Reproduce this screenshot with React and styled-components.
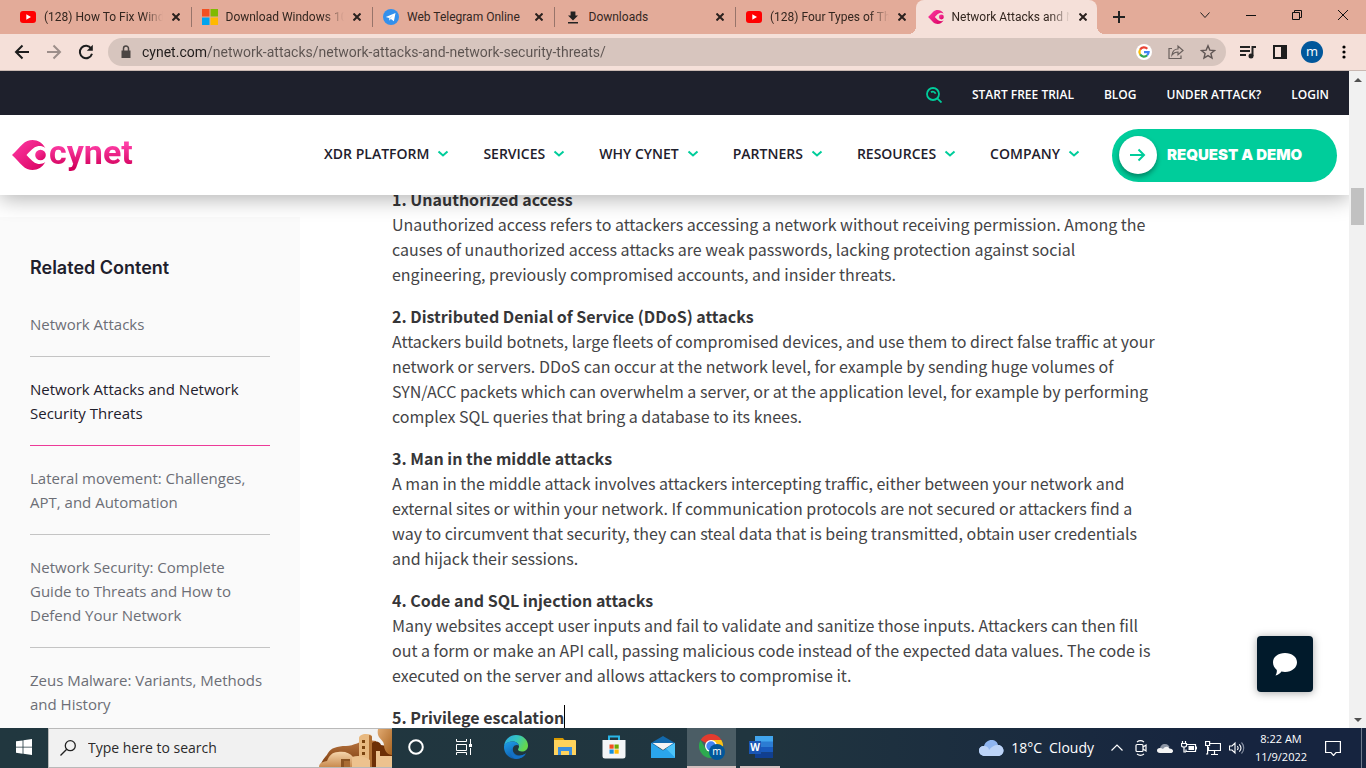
import React from 'react';
import styled, { createGlobalStyle, css } from 'styled-components';

const segoe = '"Open Sans", "Noto Sans", sans-serif';
const chromeUi = 'Roboto, "Open Sans", sans-serif';
const source = '"Noto Sans CJK SC", "Noto Sans", sans-serif';
const green = '#00cd9b';

const GlobalStyle = createGlobalStyle`
  *, *::before, *::after { box-sizing: border-box; }
  body { margin: 0; font-family: ${segoe}; overflow: hidden; }
  button { border: 0; padding: 0; background: none; font: inherit; color: inherit; }
  a { color: inherit; text-decoration: none; }
  svg { display: block; flex: none; }
  ul { list-style: none; margin: 0; padding: 0; }
`;

const Screen = styled.div`
  height: 100vh;
  display: flex;
  flex-direction: column;
`;

/* Browser tabs */
const TabStrip = styled.div`
  flex: none;
  height: 34px;
  display: flex;
  padding-left: 8px;
  background: #e3ab99;
`;
const TabList = styled.div`
  flex: 0 1 1089px;
  display: grid;
  grid-template-columns: repeat(6, minmax(0, 1fr));
`;
const Tab = styled.div`
  position: relative;
  display: flex;
  align-items: center;
  padding-right: 6px;
  font: 12px/16px ${chromeUi};
  color: #33261f;
  &::before {
    content: '';
    width: 1px;
    height: 20px;
    margin: 0 10px 0 1px;
    background: ${p => (p.$divided ? '#97746a' : 'transparent')};
  }
  ${p => p.$active && css`
    background: #f5e0d9;
    border-radius: 8px 8px 0 0;
  `}
`;
const TabFlare = styled.i`
  position: absolute;
  bottom: 0;
  width: 8px;
  height: 8px;
  ${p => (p.$right ? 'left: 100%;' : 'right: 100%;')}
  background: radial-gradient(circle at ${p => (p.$right ? '100%' : '0')} 0, transparent 8px, #f5e0d9 8px);
`;
const TabTitle = styled.button`
  flex: 1;
  min-width: 0;
  margin: 0 5px 0 8px;
  overflow: hidden;
  white-space: nowrap;
  text-align: left;
  ${p => p.$fade && 'mask-image: linear-gradient(to left, transparent, #000 20px);'}
`;
const TabClose = styled.button`
  display: grid;
  place-items: center;
  width: 16px;
  height: 16px;
`;
const NewTab = styled.button`
  display: grid;
  place-items: center;
  width: 28px;
  height: 34px;
  margin-left: 8px;
`;
const WindowControls = styled.div`
  margin-left: auto;
  display: flex;
  height: 29px;
`;
const WindowButton = styled.button`
  width: 46px;
  display: grid;
  place-items: center;
`;

/* Browser toolbar */
const Toolbar = styled.div`
  flex: none;
  height: 37px;
  display: flex;
  align-items: center;
  padding: 0 6px;
  background: #f5e0d9;
  border-bottom: 1px solid #c9b8b2;
`;
const ToolButton = styled.button`
  width: 32px;
  height: 28px;
  display: grid;
  place-items: center;
`;
const Omnibox = styled.form`
  flex: 1;
  height: 28px;
  margin: 0 6px;
  padding: 0 2px 0 10px;
  display: flex;
  align-items: center;
  border-radius: 14px;
  background: #d7c5be;
`;
const UrlInput = styled.input`
  flex: 1;
  min-width: 0;
  height: 20px;
  margin-left: 8px;
  padding: 0;
  border: 0;
  outline: 0;
  font: 14px/20px ${chromeUi};
  color: #5c5350;
  background: linear-gradient(to right, #201c1b 65px, #5c5350 65px);
  background-clip: text;
  -webkit-text-fill-color: transparent;
`;
const Avatar = styled.span`
  width: 22px;
  height: 22px;
  border-radius: 50%;
  background: #01579b;
  color: #fff;
  font-size: 13px;
  line-height: 20px;
  text-align: center;
`;

/* Page viewport */
const Viewport = styled.div`
  flex: 1;
  min-height: 0;
  display: flex;
`;
const Page = styled.div`
  position: relative;
  flex: 1;
  min-width: 0;
  overflow: hidden;
  background: #fff;
`;
const SiteHeader = styled.header`
  position: relative;
  z-index: 1;
  background: #fff;
  box-shadow: 0 4px 20px rgba(0, 0, 0, 0.3);
`;
const TopBar = styled.nav`
  height: 44px;
  display: flex;
  align-items: center;
  justify-content: flex-end;
  gap: 30px;
  padding: 4px 20px 0 0;
  background: #1e202c;
  color: #fff;
  font: 600 12px/16px ${segoe};
`;
const SearchButton = styled.button`
  width: 16px;
`;
const MainBar = styled.div`
  height: 80px;
  display: flex;
  align-items: center;
  padding: 0 12px;
`;
const Brand = styled.a`
  display: flex;
  align-items: center;
  margin-right: auto;
`;
const BrandName = styled.span`
  margin-left: 3px;
  height: 46px;
  font: 700 34px/40px Roboto, sans-serif;
  background: linear-gradient(to bottom, #ff3fa8 12px, #d2005a 36px);
  background-clip: text;
  color: transparent;
`;
const Menu = styled.nav`
  display: flex;
  gap: 34px;
  margin-right: 32px;
  padding-bottom: 2px;
`;
const MenuItem = styled.button`
  display: flex;
  align-items: center;
  gap: 8px;
  font: 600 14px/20px ${segoe};
  color: #1e202c;
`;
const DemoLink = styled.a`
  width: 225px;
  height: 53px;
  padding-left: 7px;
  display: flex;
  align-items: center;
  gap: 10px;
  border-radius: 27px;
  background: ${green};
  color: #fff;
  font: 900 15px/20px Inter, sans-serif;
  white-space: nowrap;
`;
const DemoArrow = styled.span`
  width: 38px;
  height: 38px;
  display: grid;
  place-items: center;
  border-radius: 50%;
  background: #fff;
  box-shadow: 0 3px 5px rgba(0, 0, 0, 0.35);
`;
const Columns = styled.div`
  display: flex;
  align-items: flex-start;
`;
const Sidebar = styled.aside`
  flex: none;
  width: 300px;
  margin-top: 22px;
  padding: 39px 30px;
  background: #fafafa;
`;
const SidebarTitle = styled.h2`
  margin: 0 0 12px;
  font: 600 18px/24px Inter, sans-serif;
  color: #1e202c;
`;
const SidebarItem = styled.li`
  padding: 20px 0;
  border-bottom: 1px solid ${p => (p.$current ? '#ed3a98' : '#c4c4c4')};
  font-size: 15px;
  line-height: 24px;
  color: ${p => (p.$current ? '#1e202c' : '#6c6e76')};
`;
const Article = styled.main`
  flex: 0 1 772px;
  margin: -8px 0 0 92px;
  font: 16px/25px ${source};
  color: #444446;
`;
const Section = styled.section`
  margin-bottom: 17px;
`;
const SectionTitle = styled.h3`
  margin: 0;
  display: flex;
  font: 700 16px/25px ${source};
  color: #363638;
`;
const Paragraph = styled.p`
  margin: 0;
`;
const Caret = styled.i`
  width: 1px;
  background: #000;
`;
const ChatButton = styled.button`
  position: absolute;
  right: 36px;
  bottom: 36px;
  width: 56px;
  height: 56px;
  display: grid;
  place-items: center;
  border-radius: 4px;
  background: #011a2b;
  box-shadow: 0 1px 8px rgba(0, 0, 0, 0.35);
`;
const ScrollBar = styled.div`
  flex: none;
  width: 17px;
  display: flex;
  flex-direction: column;
  background: #f1f1f1;
`;
const ScrollButton = styled.button`
  height: 17px;
  display: grid;
  place-items: center;
`;
const ScrollTrack = styled.div`
  flex: 1;
  padding: 100px 2px 0;
`;
const ScrollThumb = styled.div`
  height: 37px;
  background: #c1c1c1;
`;

/* Taskbar */
const TaskBar = styled.footer`
  flex: none;
  height: 40px;
  display: flex;
  background: linear-gradient(to right, #21373f, #20353f 55%, #16243f 90%);
  color: #fff;
`;
const TaskButton = styled.button`
  position: relative;
  width: ${p => (p.$app ? 49 : 48)}px;
  display: grid;
  place-items: center;
  background: ${p => (p.$active ? '#4b5d65' : 'none')};
  border-bottom: 2px solid ${p => (p.$active ? '#d3c0bf' : 'transparent')};
`;
const OpenMark = styled.i`
  position: absolute;
  left: 4px;
  right: 5px;
  bottom: -2px;
  height: 2px;
  background: #d3c0bf;
`;
const TaskSearch = styled.label`
  width: 344px;
  display: flex;
  align-items: center;
  padding-left: 11px;
  border: 1px solid #b9b9b9;
  border-right: 0;
  background: #f1f1f1;
`;
const TaskSearchInput = styled.input`
  flex: 1;
  min-width: 0;
  margin-left: 12px;
  padding: 0;
  border: 0;
  outline: 0;
  background: none;
  font: 14px/20px ${segoe};
  &::placeholder { color: #2b2b2b; opacity: 1; }
`;
const AppGroup = styled.div`
  display: flex;
  margin-left: 3px;
`;
const Tray = styled.div`
  margin-left: auto;
  display: flex;
  align-items: center;
`;
const Weather = styled.button`
  display: flex;
  align-items: center;
  gap: 7px;
  margin-right: 11px;
  font-size: 14px;
  line-height: 20px;
`;
const TrayButton = styled.button`
  width: 24px;
  height: 40px;
  display: grid;
  place-items: center;
`;
const Clock = styled.time`
  width: 56px;
  margin-left: 4px;
  text-align: center;
  font-size: 11px;
  line-height: 18px;
  white-space: nowrap;
`;
const Notifications = styled.button`
  width: 48px;
  height: 40px;
  margin-right: 4px;
  display: grid;
  place-items: center;
`;
const ShowDesktop = styled.button`
  width: 5px;
  height: 40px;
  border-left: 1px solid #6f7a8c;
`;

const Icon = ({ w = 16, h, box, stroke, sw = 2, children }) => (
  <svg width={w} height={h || w} viewBox={box || `0 0 ${w} ${h || w}`} fill={stroke ? 'none' : 'currentColor'} stroke={stroke} strokeWidth={sw} aria-hidden="true">
    {children}
  </svg>
);

const YouTube = () => (
  <Icon><rect y="2" width="16" height="12" rx="3" fill="#f00" /><path d="M6.3 5.3v5.4L11 8z" fill="#fff" /></Icon>
);
const Microsoft = ({ size = 16 }) => (
  <Icon w={size} box="0 0 16 16">
    <path d="M0 0h7.5v7.5H0z" fill="#f25022" /><path d="M8.5 0H16v7.5H8.5z" fill="#7fba00" />
    <path d="M0 8.5h7.5V16H0z" fill="#00a4ef" /><path d="M8.5 8.5H16V16H8.5z" fill="#ffb900" />
  </Icon>
);
const Telegram = () => (
  <Icon><circle cx="8" cy="8" r="8" fill="#3390ec" /><path d="M2.8 8 12.5 4l-1.6 8.3-3-2.2-1.5 1.4-.3-2.5z" fill="#fff" /><path d="m6.1 9 4.4-3.1-3.2 3.7-.9 1.9z" fill="#b8dbfa" /></Icon>
);
const DownloadIcon = () => (
  <Icon><path d="M5.6 2.5h4.800v4H13l-5 5-5-5h2.600zM3 13h10v1.600H3z" fill="#222" /></Icon>
);
const CynetMark = ({ w, h }) => (
  <svg width={w} height={h} viewBox="0 0 34 30" aria-hidden="true">
    <defs>
      <linearGradient id="mark" x1="0" y1="0" x2="1" y2="1">
        <stop offset="0" stopColor="#ff3ba5" /><stop offset="1" stopColor="#d8005f" />
      </linearGradient>
    </defs>
    <path d="M0 15C4 11.500 7 7.500 10.500 4.200 13.500 1.300 17 0 20.500 0c5.500 0 10 2.800 12.800 8-2.500-1.900-5.300-2.200-7.800-1.700C21.500 7 19 10.500 14.500 15c4.500 4.500 7 8 11 8.700 2.500.5 5.300.2 7.800-1.700-2.800 5.200-7.300 8-12.800 8-3.500 0-7-1.300-10-4.200C7 22.500 4 18.500 0 15z" fill="url(#mark)" />
    <circle cx="28.500" cy="15" r="5.300" fill="url(#mark)" />
  </svg>
);
const Cross = () => <Icon w={8} stroke="#2a211e" sw={2}><path d="m.5.5 7 7m0-7-7 7" /></Icon>;

const tabs = [
  { title: '(128) How To Fix Wind', icon: <YouTube />, fade: true },
  { title: 'Download Windows 10', icon: <Microsoft />, fade: true },
  { title: 'Web Telegram Online', icon: <Telegram /> },
  { title: 'Downloads', icon: <DownloadIcon /> },
  { title: '(128) Four Types of Th', icon: <YouTube />, fade: true },
  { title: 'Network Attacks and N', icon: <CynetMark w={16} h={14} />, fade: true, active: true },
];

const menu = ['XDR PLATFORM', 'SERVICES', 'WHY CYNET', 'PARTNERS', 'RESOURCES', 'COMPANY'];

const related = [
  'Network Attacks',
  'Network Attacks and Network Security Threats',
  'Lateral movement: Challenges, APT, and Automation',
  'Network Security: Complete Guide to Threats and How to Defend Your Network',
  'Zeus Malware: Variants, Methods and History',
];

const sections = [
  ['1. Unauthorized access', 'Unauthorized access refers to attackers accessing a network without receiving permission. Among the causes of unauthorized access attacks are weak passwords, lacking protection against social engineering, previously compromised accounts, and insider threats.'],
  ['2. Distributed Denial of Service (DDoS) attacks', 'Attackers build botnets, large fleets of compromised devices, and use them to direct false traffic at your network or servers. DDoS can occur at the network level, for example by sending huge volumes of SYN/ACC packets which can overwhelm a server, or at the application level, for example by performing complex SQL queries that bring a database to its knees.'],
  ['3. Man in the middle attacks', 'A man in the middle attack involves attackers intercepting traffic, either between your network and external sites or within your network. If communication protocols are not secured or attackers find a way to circumvent that security, they can steal data that is being transmitted, obtain user credentials and hijack their sessions.'],
  ['4. Code and SQL injection attacks', 'Many websites accept user inputs and fail to validate and sanitize those inputs. Attackers can then fill out a form or make an API call, passing malicious code instead of the expected data values. The code is executed on the server and allows attackers to compromise it.'],
  ['5. Privilege escalation', null],
];

function BrowserTabs() {
  return (
    <TabStrip>
      <TabList>
        {tabs.map((t, i) => (
          <Tab key={t.title} $active={t.active} $divided={i > 0 && !t.active}>
            {t.active && <><TabFlare /><TabFlare $right /></>}
            {t.icon}
            <TabTitle $fade={t.fade}>{t.title}</TabTitle>
            <TabClose aria-label="Close tab"><Cross /></TabClose>
          </Tab>
        ))}
      </TabList>
      <NewTab aria-label="New tab"><Icon w={12} stroke="#222"><path d="M6 0v12M0 6h12" /></Icon></NewTab>
      <WindowControls>
        <WindowButton aria-label="Search tabs"><Icon w={10} stroke="#222" sw={1}><path d="m.5 2.500 4.500 5 4.500-5" /></Icon></WindowButton>
        <WindowButton aria-label="Minimize"><Icon w={10} stroke="#111" sw={1}><path d="M0 5.500h10" /></Icon></WindowButton>
        <WindowButton aria-label="Restore"><Icon w={10} stroke="#111" sw={1}><path d="M.5 2.500h7v7h-7zM2.500 2.500v-2h7v7h-2" /></Icon></WindowButton>
        <WindowButton aria-label="Close"><Icon w={10} stroke="#111" sw={1}><path d="m0 0 10 10M10 0 0 10" /></Icon></WindowButton>
      </WindowControls>
    </TabStrip>
  );
}

function BrowserToolbar() {
  return (
    <Toolbar>
      <ToolButton aria-label="Back"><Icon stroke="#1d1d1d"><path d="M15 8H2m6.500-6.500L2 8l6.500 6.500" /></Icon></ToolButton>
      <ToolButton aria-label="Forward"><Icon stroke="#9c8e8a"><path d="M1 8h13M7.500 1.500 14 8l-6.500 6.500" /></Icon></ToolButton>
      <ToolButton aria-label="Reload"><Icon stroke="#1d1d1d"><path d="M13.200 4.500A6.200 6.200 0 1 0 14 9.800" /><path d="M14.800.8v6H8.800z" fill="#1d1d1d" stroke="none" /></Icon></ToolButton>
      <Omnibox>
        <Icon><path d="M3.500 6.500h9v7.500h-9z" fill="#4b4543" /><path d="M5.500 7V4.500a2.500 2.500 0 0 1 5 0V7" fill="none" stroke="#4b4543" strokeWidth="1.500" /></Icon>
        <UrlInput aria-label="Address" defaultValue="cynet.com/network-attacks/network-attacks-and-network-security-threats/" />
        <ToolButton type="button" aria-label="Search with Google">
          <Icon>
            <circle cx="8" cy="8" r="8" fill="#fff" />
            <g fill="none" strokeWidth="2.200">
              <path d="M4.100 5.600A4.600 4.600 0 0 1 11.300 4.800" stroke="#ea4335" />
              <path d="M4.100 10.400a4.600 4.600 0 0 1 0-4.800" stroke="#fbbc05" />
              <path d="M11.200 11.300A4.600 4.600 0 0 1 4.100 10.400" stroke="#34a853" />
              <path d="M8 8.200h4.600a4.600 4.600 0 0 1-1.500 3.100" stroke="#4285f4" />
            </g>
          </Icon>
        </ToolButton>
        <ToolButton type="button" aria-label="Share"><Icon stroke="#6a605d" sw={1.200}><path d="M4 4.500H1v10h12v-3" /><path d="M4 11c.5-4 2.500-6 6-6V2l5 4.500-5 4.300V8C7.500 8 5.500 9 4 11z" /></Icon></ToolButton>
        <ToolButton type="button" aria-label="Bookmark"><Icon stroke="#5f5553" sw={1.400}><path d="m8 1.800 1.800 4.300 4.700.4-3.600 3 1.100 4.600L8 11.600l-4 2.500 1.100-4.600-3.600-3 4.700-.4z" /></Icon></ToolButton>
      </Omnibox>
      <ToolButton aria-label="Media controls"><Icon stroke="#222"><path d="M0 3h10M0 7h10M0 11h6" /><path d="M12.500 12V3H16" /><circle cx="11" cy="12" r="1.500" fill="#222" /></Icon></ToolButton>
      <ToolButton aria-label="Side panel"><Icon w={14}><path d="M0 0h14v14H0zM2 2v10h6V2z" fillRule="evenodd" fill="#1d1d1d" /></Icon></ToolButton>
      <ToolButton aria-label="Profile"><Avatar>m</Avatar></ToolButton>
      <ToolButton aria-label="Browser menu"><Icon><circle cx="8" cy="3" r="1.600" /><circle cx="8" cy="8" r="1.600" /><circle cx="8" cy="13" r="1.600" /></Icon></ToolButton>
    </Toolbar>
  );
}

function Header() {
  return (
    <SiteHeader>
      <TopBar aria-label="Account">
        <SearchButton aria-label="Search">
          <Icon stroke={green} sw={1.800}><circle cx="7" cy="7" r="6" /><path d="m11.300 11.300 4.200 4.200M5 5.200c1.500-1.200 4-.5 4.500 1.500" /></Icon>
        </SearchButton>
        <a href="#trial">START FREE TRIAL</a>
        <a href="#blog">BLOG</a>
        <a href="#attack">UNDER ATTACK?</a>
        <a href="#login">LOGIN</a>
      </TopBar>
      <MainBar>
        <Brand href="#home"><CynetMark w={34} h={30} /><BrandName>cynet</BrandName></Brand>
        <Menu aria-label="Main">
          {menu.map(m => (
            <MenuItem key={m}>{m}<Icon w={12} stroke={green}><path d="m1.500 3.500 4.500 4 4.500-4" /></Icon></MenuItem>
          ))}
        </Menu>
        <DemoLink href="#demo">
          <DemoArrow><Icon stroke={green}><path d="M0 8h14M8.500 2.500 14 8l-5.500 5.500" /></Icon></DemoArrow>
          REQUEST A DEMO
        </DemoLink>
      </MainBar>
    </SiteHeader>
  );
}

const Edge = () => (
  <svg width="24" height="24" viewBox="0 0 24 24" aria-hidden="true">
    <defs>
      <linearGradient id="edgeTop" x1="0" y1="0" x2="1" y2=".4"><stop offset="0" stopColor="#2aa7e8" /><stop offset=".55" stopColor="#35c6c0" /><stop offset="1" stopColor="#64d84e" /></linearGradient>
      <linearGradient id="edgeLow" x1="0" y1="0" x2=".6" y2="1"><stop offset="0" stopColor="#1fa0ea" /><stop offset="1" stopColor="#0c56a8" /></linearGradient>
    </defs>
    <path d="M0 11C.8 4.600 5.800 0 12 0c7 0 12 5 12 10.500 0 4-3 6-6 6-2.500 0-4-1-4-2 0-.8 1-1.200 1-3C15 8.500 12 6.500 8.500 6.500 4.500 6.500 1.500 8.500 0 11z" fill="url(#edgeTop)" />
    <path d="M0 12c0-3.500 4-5.500 8.500-5.500 3.500 0 6 1.700 6.300 4.200-1-1-4.600-1-5.800 2-1.400 3.800 2 7.800 6.500 7.800 2.500 0 4.500-.8 6.500-2.200C20 22 16.500 24 12 24 5.500 24 0 19 0 12z" fill="url(#edgeLow)" />
    <path d="M9 12.700c-2 4.300 1.500 9 7 8 2.500-.3 4-1 6-2.400C20 22 16.500 24 12 24c-5-1-7.500-8-3-11.300z" fill="#1470c4" />
  </svg>
);
const Folder = () => (
  <svg width="22" height="20" viewBox="0 0 22 20" aria-hidden="true">
    <path d="M0 1h9l1.500 2H0z" fill="#d99a00" /><path d="M0 3h21a1 1 0 0 1 1 1v14H0z" fill="#ffd35c" />
    <path d="M4 10h14v8h-3v-4H7v4H4z" fill="#3b8ede" />
  </svg>
);
const Store = () => (
  <svg width="24" height="24" viewBox="0 0 24 24" aria-hidden="true">
    <path d="M7 6V1.500h10V6" fill="none" stroke="#29b6e8" strokeWidth="2" />
    <path d="M.5 5h23v16a2.500 2.500 0 0 1-2.500 2.500H3A2.500 2.500 0 0 1 .5 21z" fill="#f3f5f7" />
    <path d="M7.500 9.500h4.200v4.200H7.500z" fill="#f25022" /><path d="M12.500 9.500h4.200v4.200h-4.200z" fill="#6fa800" />
    <path d="M7.500 14.500h4.200v4.200H7.500z" fill="#1490df" /><path d="M12.500 14.500h4.200v4.200h-4.200z" fill="#ffb900" />
  </svg>
);
const Mail = () => (
  <svg width="24" height="24" viewBox="0 0 24 24" aria-hidden="true">
    <path d="M0 8 12 1l12 7v4H0z" fill="#1269ac" />
    <path d="m0 8 12 7.500L24 8v15H0z" fill="#2aa5ec" /><path d="M1.500 8h21L12 15z" fill="#f5f5f5" /><path d="m24 8-9 5.500 9 9z" fill="#4cc3f8" />
  </svg>
);
const Chrome = () => (
  <svg width="26" height="26" viewBox="0 0 26 26" aria-hidden="true">
    <path d="M12 12 1.600 6A12 12 0 0 1 22.400 6z" fill="#e33b2e" />
    <path d="M12 12V6h10.400A12 12 0 0 1 12 24z" fill="#fbc116" />
    <path d="M12 12 6.800 15 1.600 6A12 12 0 0 0 12 24l5.200-9z" fill="#2da94f" />
    <circle cx="12" cy="12" r="6" fill="#fff" /><circle cx="12" cy="12" r="4.700" fill="#4285f4" />
    <circle cx="18" cy="18" r="8" fill="#01579b" />
    <text x="18" y="21" textAnchor="middle" fontFamily="Open Sans, sans-serif" fontSize="10" fill="#fff">m</text>
  </svg>
);
const Word = () => (
  <svg width="24" height="22" viewBox="0 0 24 22" aria-hidden="true">
    <path d="M6 0h18v6H6z" fill="#41a5ee" /><path d="M6 5.500h18V11H6z" fill="#2b7cd3" /><path d="M6 11h18v5.500H6z" fill="#185abd" /><path d="M6 16.500h18V22H6z" fill="#103f91" />
    <path d="M0 5h12v13H0z" fill="#1a56b4" />
    <text x="6" y="15" textAnchor="middle" fontFamily="Open Sans, sans-serif" fontWeight="700" fontSize="10" fill="#fff">W</text>
  </svg>
);
const SearchArt = () => (
  <svg width="74" height="38" viewBox="0 0 74 38" aria-hidden="true">
    <defs>
      <linearGradient id="rock" x1="0" y1="0" x2="0" y2="1"><stop offset="0" stopColor="#b87540" /><stop offset="1" stopColor="#7a3a0c" /></linearGradient>
      <linearGradient id="sand" x1="0" y1="0" x2="0" y2="1"><stop offset="0" stopColor="#f5d5ac" /><stop offset="1" stopColor="#c98b4f" /></linearGradient>
      <linearGradient id="cliff" x1="0" y1="0" x2="1" y2="1"><stop offset="0" stopColor="#e0a970" /><stop offset="1" stopColor="#a8621f" /></linearGradient>
    </defs>
    <path d="M2 38c2-8 6-10 8-14 3-5 9-7 18-7 8 0 14-5 22-6l8 1v26z" fill="url(#rock)" />
    <path d="M54 14c4-3 8-1 9 2l11 2v20H54z" fill="#6d2f06" />
    <path d="M60 0h14v26c-4 0-8-4-8-10 0-6-8-6-6-16z" fill="url(#cliff)" />
    <path d="M1 38c0-4 3-5 8-6 2-5 5-9 11-9 7-1 12 1 15 5v10z" fill="url(#sand)" />
    <path d="M41 9c0-2 3-4 7-4s6 1 6 3v30H41z" fill="#e8b980" /><path d="M51 6c2 0 3 1 3 2v30h-3z" fill="#b06f33" />
    <path d="M44 11h3v3h-3zm0 6h3v3h-3zm0 6h3v3h-3z" fill="#7b430f" />
    <path d="M34 28c6-2 12-1 18 3v7H34zM58 22h4v5h12v11H58z" fill="#edc28e" />
    <path d="M23 30h9v8h-9z" fill="#8b5321" /><path d="M26 32h6v6h-6z" fill="#a96c33" />
  </svg>
);

function Taskbar() {
  return (
    <TaskBar>
      <TaskButton aria-label="Start"><Icon><path d="M0 2.300 6.600 1.400V7.700H0zM7.400 1.300 16 0v7.700H7.400zM0 8.400h6.600v6.300L0 13.800zM7.400 8.400H16V16l-8.600-1.200z" /></Icon></TaskButton>
      <TaskSearch>
        <Icon stroke="#222" sw={1.300}><circle cx="10.300" cy="5.700" r="5" /><path d="M6.700 9.300.5 15.500" /></Icon>
        <TaskSearchInput placeholder="Type here to search" />
        <SearchArt />
      </TaskSearch>
      <TaskButton aria-label="Cortana"><Icon stroke="#fff"><circle cx="8" cy="8" r="6.800" /></Icon></TaskButton>
      <TaskButton aria-label="Task view"><Icon stroke="#fff" sw={1}><path d="M.5 0v2.500h10V0M.5 5.500h10v6H.5zM.5 16v-2.500h10V16M14.500 0v5M14.500 9v7" /><path d="M13 5h3v3h-3z" fill="#fff" stroke="none" /></Icon></TaskButton>
      <AppGroup>
        <TaskButton $app aria-label="Edge"><Edge /></TaskButton>
        <TaskButton $app aria-label="File Explorer"><Folder /></TaskButton>
        <TaskButton $app aria-label="Store"><Store /></TaskButton>
        <TaskButton $app aria-label="Mail"><Mail /></TaskButton>
        <TaskButton $app $active aria-label="Chrome"><Chrome /></TaskButton>
        <TaskButton $app aria-label="Word"><Word /><OpenMark /></TaskButton>
      </AppGroup>
      <Tray>
        <Weather>
          <svg width="25" height="17" viewBox="0 0 25 17" aria-hidden="true">
            <path d="M5 6C6 2.500 9 0 12.500 0 16 0 18.500 2 19 5c3 0 5.500 2.500 5.500 5.500S22 16 19 16H6C2.500 16 0 13.500 0 10.700 0 8 2 6 5 6z" fill="#8fb5f0" />
            <path d="M0 10.700C0 8 2 6 5 6c3 0 5 2 5 4 2-3 5-5 9-5 3 0 5.500 2.500 5.500 5.500S22 16 19 16H6c-3.500 0-6-2.500-6-5.300z" fill="#bcd3f7" />
          </svg>
          <span>18°C</span><span>Cloudy</span>
        </Weather>
        <TrayButton aria-label="Hidden icons"><Icon w={12} stroke="#fff" sw={1.200}><path d="m.5 8.500 5.500-5.500 5.500 5.500" /></Icon></TrayButton>
        <TrayButton aria-label="Meet now"><Icon stroke="#fff" sw={1.200}><rect x="3" y="4.500" width="7" height="7" rx="1" /><path d="m10 7 3-2v6l-3-2M4 2c2-1.500 5-1.500 7 0M4 14c2 1.500 5 1.500 7 0" /></Icon></TrayButton>
        <TrayButton aria-label="OneDrive"><Icon><path d="M3 9c0-3 2-5 5-5s4 2 4.500 3L7 12z" fill="#8c95a4" /><path d="M3 13c-4 0-4-5 0-5 1 0 2 .3 3 1 2-3 5-3 6.500-.5C17 8.500 17 13 13.500 13z" fill="#f4f4f4" /></Icon></TrayButton>
        <TrayButton aria-label="Battery"><Icon stroke="#fff" sw={1.200}><path d="M6 4.500h8.500v7H5v-2M15.500 6.500v3M1.500 1v2M4.500 1v2M.5 3.500h5v2c0 1-1 1.500-2.500 1.500S.500 6.500.5 5.500zM3 7v5h2" /><path d="M7.500 6h5.500v4H7.500z" fill="#fff" stroke="none" /></Icon></TrayButton>
        <TrayButton aria-label="Network"><Icon stroke="#fff" sw={1.200}><path d="M5 3.500h10.500v7H3.500V7M9.500 10.500v4M6 14.500h7M.6 1.500h4v4h-4zM2.600 5.500V14H1" /></Icon></TrayButton>
        <TrayButton aria-label="Volume"><Icon stroke="#fff" sw={1.100}><path d="M.5 6v4H3l3 3V3L3 6zM8.300 6c1 1.200 1 2.800 0 4M10.300 4.300c2 2.200 2 5.200 0 7.400" /><path d="M12.500 2.500c3 3.200 3 7.800 0 11" stroke="#8791a3" /></Icon></TrayButton>
        <Clock>8:22 AM<br />11/9/2022</Clock>
        <Notifications aria-label="Notifications"><Icon stroke="#fff" sw={1.200}><path d="M.6 1.500h14.800v11H11l-2.500 3-2.500-3H.6z" /></Icon></Notifications>
        <ShowDesktop aria-label="Show desktop" />
      </Tray>
    </TaskBar>
  );
}

export default function App() {
  return (
    <Screen>
      <GlobalStyle />
      <BrowserTabs />
      <BrowserToolbar />
      <Viewport>
        <Page>
          <Header />
          <Columns>
            <Sidebar>
              <SidebarTitle>Related Content</SidebarTitle>
              <ul>
                {related.map((r, i) => <SidebarItem key={r} $current={i === 1}><a href="#related">{r}</a></SidebarItem>)}
              </ul>
            </Sidebar>
            <Article>
              {sections.map(([title, body]) => (
                <Section key={title}>
                  <SectionTitle>{title}{!body && <Caret />}</SectionTitle>
                  {body && <Paragraph>{body}</Paragraph>}
                </Section>
              ))}
            </Article>
          </Columns>
          <ChatButton aria-label="Open chat">
            <Icon w={26} h={24}><path d="M13 1c7 0 12 4 12 9.300S20 20 13 20c-1.300 0-2.500-.2-3.600-.5C8 21.500 6 23 3.500 23.500c1-1.500 1.500-3.500 1.300-5.500C2.300 16 1 13.400 1 10.300 1 5 6 1 13 1z" fill="#fff" /></Icon>
          </ChatButton>
        </Page>
        <ScrollBar>
          <ScrollButton aria-label="Scroll up"><Icon w={8} h={4}><path d="M0 4h8L4 0z" fill="#505050" /></Icon></ScrollButton>
          <ScrollTrack><ScrollThumb /></ScrollTrack>
          <ScrollButton aria-label="Scroll down"><Icon w={8} h={4}><path d="M0 0h8L4 4z" fill="#505050" /></Icon></ScrollButton>
        </ScrollBar>
      </Viewport>
      <Taskbar />
    </Screen>
  );
}
